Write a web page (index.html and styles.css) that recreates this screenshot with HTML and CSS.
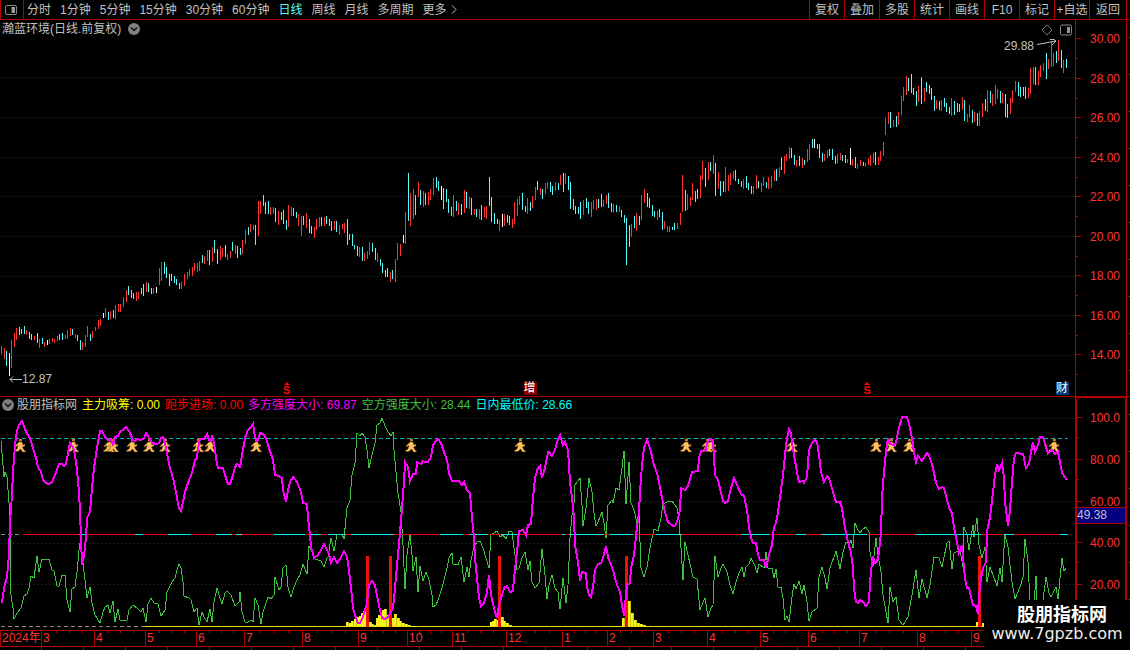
FILE: index.html
```html
<!DOCTYPE html>
<html lang="zh-CN">
<head>
<meta charset="utf-8">
<title>瀚蓝环境 日线</title>
<link rel="stylesheet" href="styles.css">
</head>
<body>
<header class="toolbar">
  <button class="layout-btn" aria-label="布局">
    <svg width="12" height="12" viewBox="0 0 12 12"><rect x="0.5" y="1.5" width="11" height="9" rx="1.5" fill="none" stroke="#888"/><rect x="6.5" y="3" width="3.5" height="6" fill="#999"/></svg>
  </button>
  <nav class="periods">
    <button>分时</button><button>1分钟</button><button>5分钟</button><button>15分钟</button><button>30分钟</button><button>60分钟</button><button class="active">日线</button><button>周线</button><button>月线</button><button>多周期</button><button class="more">更多<svg width="6" height="9" viewBox="0 0 6 9"><path d="M1 0.5 5 4.5 1 8.5" fill="none" stroke="#c0c0c0"/></svg></button>
  </nav>
  <div class="tools">
    <button>复权</button><button>叠加</button><button>多股</button><button>统计</button><button>画线</button><button>F10</button><button>标记</button><button>+自选</button><button class="back">返回</button>
  </div>
</header>

<main class="board">
  <section class="price">
    <svg class="plot" id="price" viewBox="0 20 1075 376" preserveAspectRatio="none"></svg>
    <div class="title">瀚蓝环境(日线.前复权)
      <svg width="12" height="12" viewBox="0 0 12 12"><circle cx="6" cy="6" r="6" fill="#808080"/><path d="M3 4.5 6 7.5 9 4.5" fill="none" stroke="#111" stroke-width="1.5"/></svg>
    </div>
    <div class="corner">
      <svg width="12" height="12" viewBox="0 0 12 12"><path d="M6 1 11 6 6 11 1 6Z" fill="none" stroke="#777"/></svg>
      <svg width="12" height="12" viewBox="0 0 12 12"><rect x="0.5" y="1" width="11" height="10" rx="1.5" fill="none" stroke="#888"/><rect x="7" y="3" width="3" height="6" fill="#999"/></svg>
    </div>
    <div class="note high">29.88<svg width="22" height="10" viewBox="0 0 22 10"><path d="M1 6.5 20 3M14 1.5H18L20 3 16 7" fill="none" stroke="#c0c0c0"/></svg></div>
    <div class="note low"><svg width="13" height="10" viewBox="0 0 13 10"><path d="M1 5.5H13M4 2.5 1 5.5 4 8.5" fill="none" stroke="#c0c0c0"/></svg>12.87</div>
    <div class="mark dividend d1"><svg width="6" height="4" viewBox="0 0 6 4"><path d="M3 0 6 3H0Z" fill="#f00"/></svg><b>S</b></div>
    <div class="mark dividend d2"><svg width="6" height="4" viewBox="0 0 6 4"><path d="M3 0 6 3H0Z" fill="#f00"/></svg><b>S</b></div>
    <div class="mark badge raise">增</div>
    <div class="mark badge report">财</div>
  </section>
  <aside class="scale price-scale">
    <span>30.00</span><span>28.00</span><span>26.00</span><span>24.00</span><span>22.00</span><span>20.00</span><span>18.00</span><span>16.00</span><span>14.00</span>
  </aside>
  <div class="edge edge-top"></div>

  <section class="indicator">
    <svg class="plot" id="indicator" viewBox="0 397 1075 233" preserveAspectRatio="none"></svg>
    <div class="legend">
      <svg width="12" height="12" viewBox="0 0 12 12"><circle cx="6" cy="6" r="6" fill="#808080"/><path d="M3 4.5 6 7.5 9 4.5" fill="none" stroke="#111" stroke-width="1.5"/></svg>
      <span class="name">股朋指标网</span><span class="yellow">主力吸筹: 0.00</span><span class="red">跑步进场: 0.00</span><span class="magenta">多方强度大小: 69.87</span><span class="green">空方强度大小: 28.44</span><span class="cyan">日内最低价: 28.66</span>
    </div>
  </section>
  <aside class="scale ind-scale">
    <span>100.0</span><span>80.00</span><span>60.00</span><span>40.00</span><span>20.00</span>
    <output class="cursor-value">49.38</output>
  </aside>
  <div class="edge"></div>
</main>

<div class="timeline">
  <span>2024年</span><span>3</span><span>4</span><span>5</span><span>6</span><span>7</span><span>8</span><span>9</span><span>10</span><span>11</span><span>12</span><span>1</span><span>2</span><span>3</span><span>4</span><span>5</span><span>6</span><span>7</span><span>8</span><span>9</span>
</div>
<footer class="lower"></footer>
<div class="watermark"><strong>股朋指标网</strong><span>www.7gpzb.com</span></div>
<script src="chart.js"></script>
</body>
</html>
```
FILE: styles.css
```css
* { box-sizing: border-box; }
body {
  margin: 0;
  min-height: 100vh;
  display: flex;
  flex-direction: column;
  position: relative;
  overflow: hidden;
  background: #000;
  color: #c0c0c0;
  font: 12px/16px "Liberation Sans", "Noto Sans CJK SC", sans-serif;
}
svg { display: block; flex: none; }
button {
  margin: 0;
  padding: 0;
  border: 0;
  background: none;
  color: inherit;
  font: inherit;
  white-space: nowrap;
}
.toolbar {
  display: flex;
  flex: 0 0 20px;
  border-bottom: 1px solid #b00000;
}
.layout-btn {
  width: 24px;
  padding-left: 4px;
  border: 1px solid #b00000;
  border-width: 0 1px;
}
.periods { display: flex; gap: 9px; padding-left: 3px; }
.periods .active { color: #54fcfc; }
.more { display: flex; align-items: center; gap: 4px; }
.tools { display: flex; margin-left: auto; padding-right: 3px; }
.tools button { width: 35px; border-left: 1px solid #b00000; }
.tools .back { width: 38px; border-right: 1px solid #b00000; }

.board {
  flex: 1;
  display: grid;
  grid-template-columns: 1fr 52px 3px;
  grid-template-rows: 376fr 234fr;
}
.price, .indicator { position: relative; min-height: 0; }
.plot { position: absolute; inset: 0; width: 100%; height: 100%; shape-rendering: crispEdges; }
.title, .legend { position: relative; display: flex; align-items: center; white-space: nowrap; }
.title { gap: 7px; padding: 1px 2px; }
.indicator { border-top: 1px solid #b00000; }
.legend { gap: 5px; padding-left: 2px; }
.legend .name { margin-left: -2px; }
.yellow { color: #ffff00; }
.red { color: #ff0000; }
.magenta { color: #f0f; }
.green { color: #40c040; }
.cyan { color: #0ff; }
.corner { position: absolute; top: 4px; right: 3px; display: flex; gap: 7px; }
.note { position: absolute; display: flex; align-items: center; }
.high { top: 18px; right: 17px; gap: 2px; }
.high svg { align-self: flex-start; }
.low { bottom: 9px; left: 9px; }
.mark { position: absolute; bottom: 0; }
.dividend { width: 8px; color: #f00; line-height: 9px; bottom: 1px; text-align: center; font-size: 11px; }
.dividend svg { margin: 0 auto; }
.dividend b { display: block; }
.d1 { left: 26.3%; }
.d2 { left: 80.3%; }
.badge { width: 13px; height: 13px; bottom: 1px; line-height: 13px; color: #fff; }
.raise { left: 48.7%; background: #800000; }
.report { right: 6px; background: #003c78; }

.scale {
  position: relative;
  display: flex;
  flex-direction: column;
  justify-content: space-between;
  border: 1px solid #b00000;
  border-width: 0 1px;
  color: #ff3232;
}
.scale span { position: relative; padding-left: 14px; }
.scale span::before, .scale span::after {
  content: "";
  position: absolute;
  left: 0;
  top: 7px;
  width: 5px;
  border-top: 1px solid #b00000;
}
.scale span::after { top: 27px; width: 2px; }
.price-scale { padding: 11px 0 33px; }
.ind-scale { border-width: 2px 2px 0; padding: 12px 0 37px; }
.ind-scale span { padding-left: 13px; }
.cursor-value {
  position: absolute;
  top: 47%;
  left: 0;
  right: 0;
  line-height: 15px;
  background: #000080;
  color: #c0c0c0;
  border: 1px solid #b00000;
  border-width: 1px 0;
}
.edge { background: repeating-linear-gradient(#000 0 17px, #888 17px 18px, #000 18px 37px) right / 1px 100% no-repeat; border-top: 1px solid #b00000; }
.edge-top { border-top: 0; }

.timeline {
  flex: 0 0 17px;
  display: grid;
  grid-template-columns: 41fr 53fr 51fr 51fr 48fr 58fr 56fr 49fr 45fr 54fr 56fr 45fr 46fr 54fr 53fr 48fr 51fr 58fr 54fr 159fr;
  border: 1px solid #b00000;
  border-width: 1px 0;
  color: #ff3232;
}
.timeline span {
  border-left: 1px solid #b00000;
  padding-left: 1px;
  white-space: nowrap;
  line-height: 15px;
  background: linear-gradient(90deg, transparent 26%, #b00000 26% 28%, transparent 28% 51%, #b00000 51% 53%, transparent 53% 76%, #b00000 76% 78%, transparent 78%) top / 100% 2px no-repeat;
}
.lower { flex: 0 0 3px; background: repeating-linear-gradient(90deg, transparent 0 41px, #b00000 41px 42px); }
.watermark {
  position: absolute;
  right: 0;
  bottom: 0;
  width: 146px;
  height: 50px;
  display: flex;
  flex-direction: column;
  align-items: center;
  background: #000;
  color: #fff;
  padding-top: 4px;
  line-height: 22px;
}
.watermark strong { font-size: 18px; padding-left: 10px; }
.watermark span { font: 16px/16px "DejaVu Sans", sans-serif; color: #eee; }
```
FILE: chart.js
```js
const NS = "http://www.w3.org/2000/svg";
function add(parent, tag, attrs) {
  const el = document.createElementNS(NS, tag);
  for (const k in attrs) el.setAttribute(k, attrs[k]);
  parent.appendChild(el);
  return el;
}
const price = document.getElementById("price");
const ind = document.getElementById("indicator");
const COLORS = { R: "#ff3232", C: "#54fcfc", W: "#ffffff" };

function dotted(svg, ys) {
  for (const y of ys) add(svg, "path", { d: `M1 ${y + 0.5}H1075`, stroke: "#a00000", "stroke-dasharray": "1 3", fill: "none" });
}
dotted(price, [77, 117, 157, 196, 236, 276, 315, 355]);
dotted(ind, [418, 459, 501, 543, 584]);

/* Each block: origin x, origin y, then "x high low colour" bars in thirds of a unit. */
const BARS = [
[0, 230, `4 348 372 R,13 354 387 R,19 363 408 C,28 370 440 W,34 330 413 R,43 309 351 R,49 294 330 R,58 291 315 C,64 297 312 C,73 288 312 C,79 300 315 R,88 306 327 C,94 312 330 C,103 318 330 R,112 309 339 C,118 327 354 R,127 324 342 C,133 336 351 R,142 330 345 W,148 327 342 R,157 324 336 R,163 327 339 R,172 318 333 R,178 312 330 C,187 309 330 C,196 315 327 R,202 300 327 R,211 294 318 R,217 297 315 C,226 312 324 R,232 315 333 C,241 330 360 C,247 336 360 R,256 315 351 R,262 288 321 R,271 312 333 C,277 303 324 R,286 291 303 R,295 270 297 R,301 267 288 R,310 249 264 W,316 234 262 R,325 246 270 C,331 243 267 R,340 240 264 C,346 225 267 R,355 222 246 R,361 222 246 R,370 201 231 R,379 180 216 R,385 168 195 C,394 180 204 C,400 189 207 C,409 186 213 R,415 186 207 R,424 174 192 C,430 162 198 C,439 156 186 R,445 159 186 C,454 174 192 C,460 174 192 R,469 171 189 W,478 114 165 R,484 96 153 R,493 96 132 C,499 111 144 C,508 132 168 C,514 132 153 C,523 138 159 C,529 147 165 C,538 159 177 C,544 156 177 R,553 132 168 R,562 126 147 R,568 117 138 R,577 111 138 R,583 99 123 R,592 99 126 R,598 93 123 R,607 75 99 C,613 78 102 R,622 60 93 R,628 60 105 C,637 51 96 R,643 30 69 C,652 57 102 C,661 48 90 R,667 54 81 R,676 45 81 C,682 72 90 R,691 63 84 R,697 36 63 C,706 45 72 R,712 48 84 C,721 54 75 C,727 30 72 R`],
[240, 180, `16 150 192 R,25 141 165 C,31 132 156 R,40 135 150 R,46 135 195 C,55 63 168 R,61 63 102 R,70 45 78 C,76 66 102 C,85 63 102 C,91 81 105 R,100 81 102 R,106 84 126 C,115 93 135 R,124 96 120 C,130 90 132 C,139 120 150 C,145 75 141 R,154 81 108 R,160 84 108 C,169 96 114 C,175 102 138 R,184 108 168 R,190 108 135 C,199 99 144 R,208 117 159 C,214 138 162 C,223 141 174 R,229 117 150 R,238 111 141 R,244 111 138 C,253 111 138 R,259 108 132 C,268 117 138 C,274 123 153 C,283 123 150 R,289 123 156 C,298 135 165 R,307 132 147 R,313 129 159 R,322 117 195 C,328 162 180 C,337 162 198 C,343 195 207 C,352 198 228 C,358 201 231 R,367 201 243 C,373 219 243 R,382 213 237 R,388 186 225 R,397 189 216 C,406 204 240 C,412 219 246 R,421 237 258 C,427 249 279 C,436 270 291 C,442 264 291 C,451 276 306 R,457 270 297 C,466 237 306 R,472 189 240 R,481 192 228 R,490 165 189 W,496 96 192 R,505 -21 123 C,511 39 138 R,520 27 117 R,526 45 105 C,535 6 51 R,541 30 75 C,550 33 81 R,556 39 75 C,565 36 75 R,571 27 60 R,580 -6 45 R,589 -9 24 C,595 3 33 C,604 18 60 W,610 24 87 C,619 27 66 C,625 57 99 C,634 81 108 C,640 45 111 R,649 63 93 C,655 69 105 R,664 72 105 C,673 30 99 R,679 36 84 C,688 51 87 R,694 54 105 C,703 87 105 R,709 87 111 C,718 87 117 R,724 75 120 C,733 81 111 R,739 78 117 R,748 -9 78 C,754 51 126 C,763 99 132 C,772 117 132 C,778 120 153 R,787 102 141 W`],
[500, 150, `13 192 228 R,22 195 219 C,28 198 225 C,37 207 234 R,43 156 222 R,52 147 198 R,58 138 165 R,67 129 180 C,76 168 186 C,82 144 192 R,91 156 183 C,97 138 174 R,106 111 150 R,112 93 120 C,121 114 135 R,127 117 147 C,136 99 132 R,142 96 117 R,151 96 126 C,157 108 135 C,166 96 123 R,175 99 120 C,181 75 105 R,190 69 126 C,196 69 102 R,205 78 120 C,211 96 177 C,220 147 180 C,226 168 192 C,235 171 192 C,241 156 207 C,250 150 195 R,259 144 174 C,265 156 192 C,274 156 201 R,280 150 177 R,289 147 180 R,295 147 174 C,304 132 171 C,310 150 171 R,319 135 162 R,325 129 174 C,334 159 186 C,340 162 189 R,349 165 186 C,358 168 186 R,364 180 201 C,373 195 219 C,379 204 345 C,388 225 291 C,394 222 261 R,403 198 234 C,409 189 243 R,418 198 225 C,424 135 210 R,433 117 159 R,442 129 171 C,448 144 174 C,457 165 198 C,463 183 201 C,472 183 210 R,478 177 201 C,487 186 240 C,493 213 237 R,502 228 246 R,508 228 246 R,517 231 240 C,523 219 240 C,532 219 237 R,541 189 225 R,547 75 186 R,556 120 183 C,562 132 180 R,571 141 168 R,577 99 150 R,586 123 156 C,592 117 147 C,601 75 144 R,607 33 90 R,616 54 111 C,625 36 90 R,631 36 63 C,640 15 72 R,646 39 138 C,655 66 117 R,661 93 138 C,670 93 126 C,676 51 126 R,685 75 123 R,691 69 105 R,700 63 87 R,706 60 93 C,715 87 102 C,724 93 111 C,730 87 117 R,739 78 114 C,745 99 120 C,754 108 132 C,760 108 132 R,769 75 117 R,775 93 114 C,784 99 126 R,790 81 108 R,799 96 114 C,805 81 117 R,814 78 114 R,823 60 93 R,829 57 93 C,838 51 81 R`],
[780, 30, `4 380 420 C,13 378 432 R,19 372 393 R,28 351 387 R,34 354 384 C,43 375 405 C,49 390 411 R,58 378 408 C,67 384 414 R,73 390 405 C,82 357 396 R,88 342 390 R,97 327 354 C,103 327 354 W,112 342 357 C,118 342 384 C,127 369 396 C,133 372 393 R,142 360 384 R,148 357 378 C,157 357 390 C,166 378 402 C,172 372 399 R,181 369 390 R,187 375 393 C,196 375 399 C,202 387 399 R,211 354 405 W,217 387 408 R,226 381 414 C,232 402 417 R,241 390 408 R,250 396 408 C,256 399 411 R,265 384 405 R,271 375 408 R,280 369 399 R,286 366 405 C,295 381 405 R,301 363 393 R,310 336 378 R,316 264 315 R,325 246 282 R,331 246 294 C,340 270 291 R,349 258 291 C,355 246 285 R,364 198 255 R,370 171 213 R,379 138 195 R,385 144 183 C,394 132 189 C,400 174 195 C,409 183 228 C,415 168 216 R,424 141 222 C,433 174 216 R,439 156 186 C,448 165 192 C,454 174 210 C,463 198 243 C,469 210 237 R,478 213 240 C,484 210 243 R,493 204 231 C,499 219 246 C,508 231 252 C,514 204 258 R,523 213 255 C,532 219 246 C,538 222 246 C,547 201 240 R,553 210 273 C,562 252 276 R,568 225 264 R,577 240 279 C,583 246 276 R,592 249 288 C,598 243 288 R,607 219 261 R,616 207 243 C,622 180 246 R,631 183 219 C,637 192 228 R,646 165 222 R,652 177 207 R,661 183 219 C,667 189 219 R,676 192 261 C,682 222 264 C,691 204 252 R,697 180 219 R,706 153 186 R,715 156 198 C,721 171 201 C,730 171 198 C,736 171 207 C,745 174 204 R,751 114 192 R,760 111 162 R,766 111 165 C,775 123 165 R,781 105 141 R,790 99 123 R,799 69 147 C,805 87 117 R,814 33 111 R,820 69 108 R,829 63 99 C,835 30 93 R,844 60 114 C,850 90 129 R,859 87 114 C`]
];
for (const [ox, oy, text] of BARS) {
  for (const item of text.split(",")) {
    const [x, hi, lo, c] = item.split(" ");
    add(price, "rect", { x: ox + Math.floor(x / 3), y: oy + Math.round(hi / 3), width: 1, height: Math.round((lo - hi) / 3), fill: COLORS[c] });
  }
}

const BULL = [
[0, `5,625 13,580 20,545 28,480 31,380 36,300 40,230 46,150 52,105 58,90 65,79 72,92 78,110 90,128 98,160 108,190 113,217 122,232 130,255 138,264 146,267 155,260 165,240 178,207 186,206 192,212 198,208 204,175 208,158 211,145 218,155 226,180 232,225 236,290 239,350 243,430 246,510 252,480 258,430 261,370 270,350 275,280 283,220 292,160 300,108 306,107 316,125 325,135 333,133 340,152 346,125 354,124 360,112 372,103 379,96 387,108 398,135 405,138 412,131 422,134 432,130 438,114 445,124 455,144 470,147 478,144 482,128 490,126 496,145 502,175 510,220 522,260 530,310 537,338 543,348 550,320 556,290 564,265 577,235 584,195 590,188 595,160 599,132 612,131 621,117 626,135 632,138 637,120 643,145 648,190 653,218 668,220 676,240 683,267 690,266 698,240 705,215 711,207 717,210 721,218 727,180 735,130 745,105 752,95 759,87 764,125 771,138 778,128 780,115 790,117 798,128 806,160 820,195 825,240 838,243`],
[280, `0,245 6,250 10,285 19,321 25,285 31,262 40,247 50,262 64,290 68,325 80,328 85,370 90,420 94,455 98,478 103,488 113,480 122,465 133,447 140,465 148,478 153,503 162,485 170,503 180,492 192,468 200,485 208,525 214,580 220,640 228,670 234,684 240,683 250,665 256,645 262,625 267,570 277,558 285,570 293,615 300,645 305,670 315,673 325,665 332,652 340,640 346,580 350,510 354,480 360,410 367,340 372,260 376,201 384,215 391,257 400,238 407,236 412,202 418,205 424,208 428,198 436,200 445,200 452,185 460,150 467,138 475,131 483,143 493,172 500,195 507,235 516,257 538,258 545,270 553,262 560,285 569,295 575,370 582,430 586,490 592,550 598,610 604,634 612,625 620,590 627,540 633,600 645,650 652,670 658,630 665,600 673,580 682,573 690,590 698,588 703,550 710,470 717,408 728,405 737,420 743,390 753,388 760,310 766,250 773,220 780,212 787,248 795,220 803,170 808,170 817,183 825,165 832,140 841,120 848,150 855,142 865,165 870,260 876,310 882,370 886,450 893,500 900,558`],
[560, `66,532 78,535 82,575 86,600 94,606 100,575 106,525 114,506 124,503 130,490 138,453 145,485 158,525 168,560 180,590 185,630 193,663 197,600 200,570 209,565 213,520 222,480 230,395 238,350 241,290 245,210 252,160 261,135 270,160 281,210 290,235 298,260 307,310 315,350 325,380 338,393 345,392 352,382 360,345 364,280 375,286 385,272 396,230 413,228 418,190 424,168 438,165 441,145 450,132 460,134 466,240 474,255 482,295 488,318 495,324 505,318 510,290 518,258 523,250 532,270 543,298 552,303 560,345 567,395 573,430 578,445 589,443 595,480 600,494 613,496 619,520 628,480 635,450 641,395 649,385 655,350 661,310 668,240 675,180 680,130 688,103 693,115 697,145 703,180 710,230 718,262 728,257 733,265 740,245 746,165 755,145 766,135 772,140 777,180 783,230 792,262 800,243 808,248 818,290 828,322`],
[840, `0,320 5,340 14,400 24,440 32,475 38,520 43,580 49,620 55,625 61,615 70,620 79,632 86,620 91,560 97,500 99,482 105,505 110,500 116,470 122,410 127,310 132,230 138,170 145,128 151,148 162,150 168,145 177,100 187,66 200,66 208,88 216,130 222,170 229,200 235,183 245,197 255,183 261,173 268,180 278,220 288,265 298,283 305,275 313,280 320,315 330,345 337,355 343,395 352,440 358,475 366,450 370,490 376,550 382,580 388,578 394,605 400,630 407,633 413,657 418,600 424,550 428,520 438,500 440,410 450,365 460,290 466,240 471,206 478,225 487,205 491,250 495,320 500,370 503,392 510,345 516,260 523,190 528,175 550,178 557,220 566,208 572,170 580,141 585,170 595,150 600,127 610,127 617,155 624,173 635,166 645,178 653,170 660,200 667,235 680,256`]
];
const BEAR = [
[0, `4,138 12,245 16,232 21,245 27,325 31,420 34,600 38,640 43,673 50,655 63,640 73,602 80,598 88,580 94,543 103,550 112,484 118,530 127,493 147,493 157,525 163,528 172,572 178,572 187,541 196,541 202,615 211,652 217,583 226,575 232,530 238,465 242,425 247,480 256,555 262,610 271,577 277,625 286,660 300,683 310,650 316,635 325,631 331,655 340,617 346,680 354,642 361,675 380,675 388,645 398,631 410,640 424,650 430,638 438,682 445,628 454,608 461,625 474,627 484,663 494,645 500,590 516,560 525,550 532,525 538,506 544,520 548,560 553,603 566,610 574,615 582,650 590,640 598,690 607,652 613,667 622,680 629,643 637,680 643,620 652,580 660,610 666,628 674,595 682,589 692,600 706,632 716,620 720,590 725,650 735,680 745,682 755,675 760,682 766,610 775,630 782,688 790,650 803,605 812,612 822,600 826,545 836,585 844,575 850,520 858,511 864,575 870,597`],
[280, `34,605 42,575 52,555 60,540 70,507 80,537 88,452 95,470 105,493 122,497 133,517 140,490 145,485 154,430 162,468 170,420 185,418 193,432 200,340 210,315 216,240 224,205 230,115 240,122 245,115 256,125 262,165 268,220 275,180 285,145 292,90 300,85 307,70 315,92 325,112 333,122 338,112 342,165 347,230 355,295 363,350 370,450 376,583 382,480 390,418 396,480 400,527 407,485 415,592 421,512 430,557 437,530 448,555 455,600 460,636 468,630 475,615 487,580 500,520 507,490 515,475 520,508 534,510 544,487 553,560 560,515 568,545 573,495 582,455 590,440 600,437 610,460 627,520 634,420 652,407 660,425 668,420 678,433 688,407 697,410 703,460 710,525 718,520 725,490 736,472 743,525 750,498 757,560 766,580 778,563 787,462 795,540 802,612 808,570 817,540 825,580 833,590 841,642 850,550 857,625 865,570 870,430 875,360 881,325 885,270 899,250`],
[560, `60,248 66,330 70,392 78,340 86,250 95,290 102,355 108,393 115,380 125,350 132,385 139,430 145,330 155,315 160,325 168,280 178,285 186,220 193,168 199,328 208,200 214,325 222,345 232,385 238,360 243,520 253,547 260,515 270,460 281,402 295,408 302,370 308,328 320,320 337,317 350,340 358,375 363,460 368,555 376,440 383,480 398,545 412,553 421,645 428,620 436,610 445,665 452,640 460,630 466,482 475,545 482,520 490,506 502,530 510,570 520,597 528,560 537,535 545,515 551,545 558,515 566,508 574,490 585,512 590,535 598,507 612,518 619,470 625,520 635,520 643,550 649,523 655,575 663,575 668,610 674,675 680,663 688,680 695,605 703,567 709,582 718,557 726,597 733,570 740,620 748,678 757,650 772,640 778,545 787,515 795,550 802,582 810,520 827,468 841,522 850,470 858,440 870,445`],
[840, `32,435 38,458 46,385 52,400 61,415 70,402 79,395 86,410 90,470 98,512 107,430 115,480 122,530 130,600 145,685 151,577 160,622 168,605 176,676 190,690 203,665 215,600 229,525 236,610 245,552 260,610 270,570 283,487 298,488 306,515 320,445 327,437 336,523 343,475 360,465 368,515 373,395 382,420 388,465 398,390 403,425 412,370 418,450 427,490 435,455 440,560 451,515 472,573 481,520 487,560 492,460 496,420 505,455 515,560 526,613 540,575 550,545 556,433 565,500 571,620 583,630 587,542 592,630 606,640 619,547 628,595 634,607 649,577 655,612 665,490 671,527 678,520`]
];
function points(blocks) {
  return blocks.map(([ox, text]) => text.split(" ").map(p => {
    const [x, y] = p.split(",");
    return Math.round(ox + x / 3) + "," + Math.round(395 + y / 3);
  }).join(" ")).join(" ");
}

add(ind, "path", { d: "M1 438.5H1068", stroke: "#00b4b4", "stroke-dasharray": "4 3", fill: "none" });

/* volume of accumulation: x and top of each column down to the zero line */
const COLUMNS = "346,622 349,623 351,621 354,619 357,617 359,616 361,613 363,611 365,609 369,622 371,624 374,625 376,618 378,615 380,612 382,610 384,609 387,615 389,617 392,618 394,614 397,618 399,621 402,623 405,624 408,625 490,622 492,621 494,619 497,620 501,617 503,621 506,623 509,625 622,618 628,601 631,613 634,620 637,623 640,624 643,625 976,622 982,623";
for (const c of COLUMNS.split(" ")) {
  const [x, y] = c.split(",").map(Number);
  add(ind, "rect", { x, y, width: 2, height: 627 - y, fill: "#f4f420" });
  add(ind, "rect", { x: x + 2, y, width: 1, height: 627 - y, fill: "#c8c800" });
}
add(ind, "path", { d: "M1 626.5H145", stroke: "#888", "stroke-dasharray": "4 3" });
add(ind, "path", { d: "M145 626.5H1075", stroke: "#e6e600" });

/* running figures */
for (const x of [20, 73, 109, 113, 132, 149, 165, 198, 210, 256, 411, 520, 686, 707, 711, 792, 876, 891, 909, 1054]) {
  const g = add(ind, "g", { transform: `translate(${x} 438)`, fill: "#ffc060", "shape-rendering": "auto" });
  add(g, "circle", { cx: 0.5, cy: 2, r: 1.6, fill: "#d08030" });
  add(g, "path", { d: "M-1 4H2L3 7 5 6V8L2.5 9 4 12 5.5 13V14H2.5L0.5 11-2 13.5H-5.5V12.5L-3 11-2 7.5-4.5 9-5 8-2.5 5.5Z", stroke: "#603000", "stroke-width": 0.4 });
}
for (const x of [366, 389, 498, 625, 978]) add(ind, "rect", { x, y: 556, width: 3, height: 71, fill: "#f01400" });

add(ind, "polyline", { points: points(BEAR), fill: "none", stroke: "#40c040" });

add(ind, "path", { d: "M1 534.5H22", stroke: "#888", "stroke-dasharray": "4 3" });
add(ind, "path", { d: "M23 534.5H1068", stroke: "#f00000" });
for (const [a, b] of [[79, 87], [135, 143], [168, 191], [216, 232], [236, 242], [274, 305], [309, 321], [328, 346], [351, 394], [440, 463], [469, 488], [501, 518], [562, 565], [569, 604], [610, 633], [656, 682], [741, 769], [796, 806], [821, 867], [915, 981], [1004, 1014], [1060, 1068]])
  add(ind, "path", { d: `M${a} 534.5H${b}`, stroke: "#00f0f0" });

add(ind, "polyline", { points: points(BULL), fill: "none", stroke: "#ff00ff", "stroke-width": 2 });
```
